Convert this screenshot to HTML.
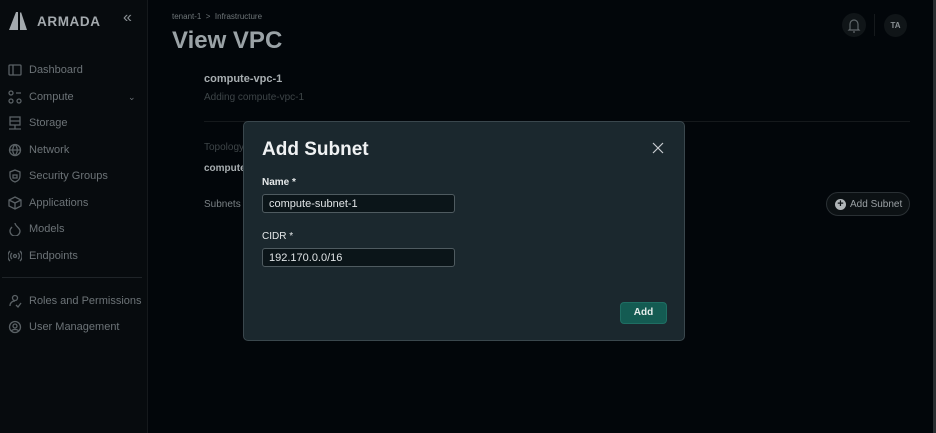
<!DOCTYPE html>
<html><head><meta charset="utf-8"><style>
*{box-sizing:border-box;margin:0;padding:0}
body{width:936px;height:433px;overflow:hidden;background:#02060a;font-family:"Liberation Sans",sans-serif;position:relative;color:#8a9094}
.sb{position:absolute;left:0;top:0;width:148px;height:433px;background:#070b0e;border-right:1px solid #15191c}
.logo{position:absolute;left:8px;top:11px;display:flex;align-items:center;gap:3px;color:#a4aaae;font-weight:bold;font-size:13.5px;letter-spacing:.6px}
.col{position:absolute;left:123px;top:9px;color:#8a9094;font-size:16px}
.nav{position:absolute;left:8px;font-size:11px;color:#6c7377;display:flex;align-items:center;gap:7px}
.nav svg{width:14px;height:14px;stroke:#5a6165;fill:none;stroke-width:1.3}
.sep{position:absolute;left:2px;width:140px;top:277px;border-top:1px solid #1f2428}
.a{position:absolute}
.modal{position:absolute;left:243px;top:121px;width:442px;height:220px;background:#1b282e;border:1px solid #3a474d;border-radius:5px}
.inp{position:absolute;left:18px;width:193px;height:19px;background:#0b1519;border:1px solid #4f5b60;border-radius:3px;color:#e0e4e6;font-size:11px;padding:2px 6px;line-height:14px}
.lbl{position:absolute;left:18px;font-size:10px;color:#e6e9ea;font-weight:bold}
</style></head><body>
<div class="sb">
 <div class="logo"><svg width="26" height="20" viewBox="0 0 26 20"><path d="M1 19 L8 1 L10 1 L10 19Z M12 19 L12 2 L13 1 L19 19Z" fill="#a4aaae"/></svg>ARMADA</div>
 <div class="col">«</div>
 <div class="nav" style="top:63px"><svg viewBox="0 0 14 14"><rect x="1" y="2" width="12" height="10" rx="1"/><path d="M5 2v10"/></svg>Dashboard</div>
 <div class="nav" style="top:90px"><svg viewBox="0 0 14 14"><circle cx="3" cy="3" r="2"/><circle cx="3" cy="11" r="2"/><circle cx="11" cy="11" r="2"/><path d="M8 3h5"/></svg>Compute<span style="position:absolute;left:120px;font-size:9px">⌄</span></div>
 <div class="nav" style="top:116px"><svg viewBox="0 0 14 14"><rect x="2" y="1" width="10" height="8"/><path d="M2 5h10M1 13h12M7 9v4"/></svg>Storage</div>
 <div class="nav" style="top:143px"><svg viewBox="0 0 14 14"><circle cx="7" cy="7" r="5.5"/><path d="M1.5 7h11M7 1.5c-3 3-3 8 0 11c3-3 3-8 0-11"/></svg>Network</div>
 <div class="nav" style="top:169px"><svg viewBox="0 0 14 14"><path d="M7 1l5 2v4c0 3-2 5-5 6c-3-1-5-3-5-6V3z"/><rect x="5" y="6" width="4" height="3"/></svg>Security Groups</div>
 <div class="nav" style="top:196px"><svg viewBox="0 0 14 14"><path d="M7 1l6 3v6l-6 3l-6-3V4z M1 4l6 3l6-3M7 7v6"/></svg>Applications</div>
 <div class="nav" style="top:222px"><svg viewBox="0 0 14 14"><path d="M7 1c0 3 5 5 5 8a5 5 0 0 1-10 0c0-2 1-3 2-4"/></svg>Models</div>
 <div class="nav" style="top:249px"><svg viewBox="0 0 14 14"><circle cx="7" cy="7" r="1.5"/><path d="M4 4a4 4 0 0 0 0 6M10 4a4 4 0 0 1 0 6M2 2a7 7 0 0 0 0 10M12 2a7 7 0 0 1 0 10"/></svg>Endpoints</div>
 <div class="sep"></div>
 <div class="nav" style="top:294px"><svg viewBox="0 0 14 14"><circle cx="7" cy="4" r="2.5"/><path d="M2 12c0-3 2-5 5-5M8 11l2 2l3-4"/></svg>Roles and Permissions</div>
 <div class="nav" style="top:320px"><svg viewBox="0 0 14 14"><circle cx="7" cy="7" r="5.5"/><circle cx="7" cy="6" r="2"/><path d="M3.5 11c1-2 6-2 7 0"/></svg>User Management</div>
</div>
<div class="a" style="left:172px;top:12px;font-size:8px;color:#6f7679">tenant-1 &nbsp;&gt;&nbsp; Infrastructure</div>
<div class="a" style="left:172px;top:27px;font-size:24px;color:#9aa2a6;font-weight:bold">View VPC</div>
<div class="a" style="left:204px;top:73px;font-size:11px;color:#a8aeb1;font-weight:bold">compute-vpc-1</div>
<div class="a" style="left:204px;top:92px;font-size:10px;color:#3e4548">Adding compute-vpc-1</div>
<div class="a" style="left:204px;top:121px;width:706px;border-top:1px solid #15191c"></div>
<div class="a" style="left:204px;top:142px;font-size:10px;color:#3e4548">Topology</div>
<div class="a" style="left:204px;top:163px;font-size:10px;color:#a8aeb1;font-weight:bold">compute</div>
<div class="a" style="left:204px;top:199px;font-size:10px;color:#7a8185">Subnets</div>
<div class="a" style="left:826px;top:192px;width:84px;height:24px;border:1px solid #2a3034;border-radius:12px;background:#0c1114;font-size:10px;color:#9aa0a4;display:flex;align-items:center;padding-left:8px;gap:4px"><span style="width:11px;height:11px;border-radius:50%;background:#b0b5b8;color:#0c1114;font-size:11px;line-height:11px;text-align:center;font-weight:bold">+</span>Add Subnet</div>
<div class="a" style="left:842px;top:13px;width:24px;height:24px;border-radius:50%;background:#101518"><svg width="24" height="24" viewBox="0 0 24 24" fill="none" stroke="#5f666a" stroke-width="1.2"><path d="M8 16V11a4 4 0 0 1 8 0v5l1 1H7z M11 19h2"/></svg></div>
<div class="a" style="left:874px;top:14px;border-left:1px solid #15191c;height:22px"></div>
<div class="a" style="left:884px;top:14px;width:23px;height:23px;border-radius:50%;background:#101518;color:#8a9094;font-size:8px;font-weight:bold;text-align:center;line-height:23px">TA</div>
<div class="a" style="left:933px;top:0;width:3px;height:433px;background:#2a2e31"></div>
<div class="modal">
 <div class="a" style="left:18px;top:17px;font-size:19px;font-weight:bold;color:#f0f2f3">Add Subnet</div>
 <svg class="a" style="left:408px;top:20px" width="12" height="12" viewBox="0 0 12 12" stroke="#c8cdd0" stroke-width="1.2"><path d="M1 1l10 10M11 1L1 11"/></svg>
 <div class="lbl" style="top:55px">Name *</div>
 <div class="inp" style="top:72px">compute-subnet-1</div>
 <div class="lbl" style="top:109px;font-weight:normal">CIDR *</div>
 <div class="inp" style="top:126px">192.170.0.0/16</div>
 <div class="a" style="left:376px;top:180px;width:47px;height:22px;background:#145b52;border:1px solid #1f6e63;border-radius:4px;color:#e4ecea;font-size:10px;font-weight:bold;text-align:center;line-height:20px">Add</div>
</div>
</body></html>
